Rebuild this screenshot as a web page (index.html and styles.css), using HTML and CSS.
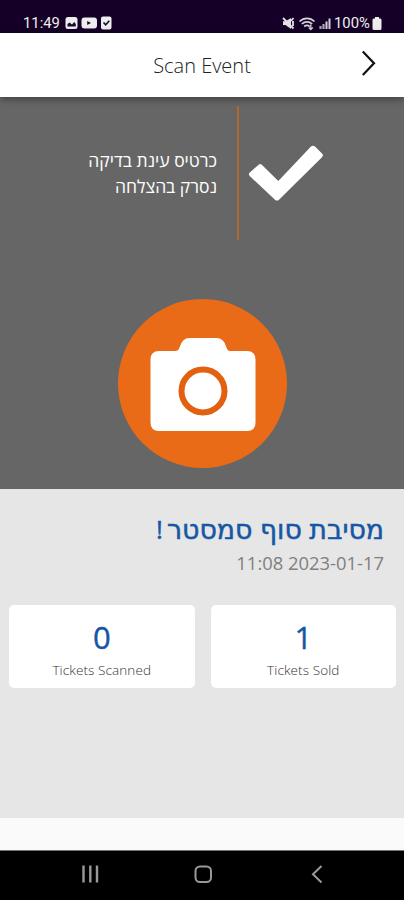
FILE: index.html
```html
<!DOCTYPE html>
<html lang="he">
<head>
<meta charset="utf-8">
<title>Scan Event</title>
<link rel="stylesheet" href="styles.css">
</head>
<body>
<div class="statusbar">
  <span class="clock">11:49</span>
  <svg class="status-left" width="48" height="14" viewBox="0 0 48 14">
    <rect x="0.5" y="1" width="12" height="12" rx="2.5" fill="#eee"/>
    <path d="M2.500 10.500V8l2-1.500 2.500 2 2.200-2.500 1.600 2v2.500z" fill="#190a30"/>
    <rect x="16.500" y="1.500" width="15.500" height="11" rx="3" fill="#eee"/>
    <path d="M22.200 4.900l3.800 2.100-3.800 2.100z" fill="#190a30"/>
    <rect x="36" y="0.500" width="10.500" height="13" rx="2" fill="#eee"/>
    <path d="M38.500 6.500l2.200 2.300 3.600-4" fill="none" stroke="#190a30" stroke-width="1.600"/>
  </svg>
  <svg class="status-right" width="50" height="15" viewBox="0 0 50 15">
    <path d="M1 5.200h2.500L9 2v11L3.500 9H1z" fill="#e4e2e8"/>
    <path d="M1 2l10.500 10.500M9 5l2.500-3M11 5v5" fill="none" stroke="#e4e2e8" stroke-width="1.800"/>
    <path d="M17.500 5.500c4.400-4.200 10.600-4.200 15 0M19.800 8c3-2.900 7.400-2.900 10.400 0M22.200 10.500c1.700-1.500 3.800-1.500 5.500 0" fill="none" stroke="#d4d2da" stroke-width="1.700"/>
    <path d="M28.800 8.500v5M26.800 11.500l2 2 2-2" fill="none" stroke="#d4d2da" stroke-width="1.300"/>
    <path d="M38.500 10v3M41.500 8v5" stroke="#aaa7b3" stroke-width="2.200"/>
    <path d="M44.500 5.500V13M47.500 2.500V13" stroke="#d4d2da" stroke-width="2"/>
  </svg>
  <span class="percent">100%</span>
  <svg class="battery" width="10" height="13" viewBox="0 0 10 13"><path d="M3 0h4v1.500h1.200Q9.500 1.500 9.500 3v8.500q0 1.500-1.500 1.500H2Q.5 13 .5 11.500V3q0-1.500 1.300-1.500H3z" fill="#eee"/></svg>
</div>
<header class="header">
  <h1 class="header-title">Scan Event</h1>
  <svg class="chevron" width="16" height="28" viewBox="0 0 16 28"><path d="M1.800 2.500L13 14.300 1.800 26" fill="none" stroke="#111" stroke-width="2.200"/></svg>
</header>
<main>
  <section class="scanner">
    <div class="result" dir="rtl">
      <svg class="check" width="78" height="58" viewBox="0 0 78 58"><path d="M12 20.500L2.800 28.500Q1 30.200 2.700 32L28 55.700q2 1.800 4 0L75 13.200q1.700-2 0-3.700L68 2.500q-2-1.700-4 0L31.300 37 14.500 20.500q-1.200-1-2.500 0z" fill="#fff"/></svg>
      <div class="message"><span class="line-one">כרטיס עינת בדיקה</span><span class="line-two">נסרק בהצלחה</span></div>
    </div>
    <div class="camera">
      <svg width="106" height="94" viewBox="0 0 106 94"><path d="M9 14h16Q28.500 14 29.500 10.500 32 1 39.500 1h27Q74 1 76.500 10.500q1 3.500 3.500 3.500h17q8.500 0 8.500 8.500v63q0 8.500-8.500 8.500H9q-8.500 0-8.500-8.500v-63Q.5 14 9 14z" fill="#fff"/><circle cx="53" cy="54" r="21.500" fill="none" stroke="#e26010" stroke-width="6"/></svg>
    </div>
  </section>
  <section class="event">
    <h2 class="event-name" dir="rtl"><span>מסיבת סוף סמסטר</span><span class="mark">!</span></h2>
    <p class="event-date">11:08 2023-01-17</p>
    <div class="stats">
      <div class="card"><span class="number">0</span><span class="label">Tickets Scanned</span></div>
      <div class="card"><span class="number">1</span><span class="label">Tickets Sold</span></div>
    </div>
  </section>
</main>
<nav class="navbar">
  <svg width="404" height="48" viewBox="0 0 404 48" fill="none" stroke="#999" stroke-width="2">
    <path d="M83.500 14.500v17M90.300 14.500v17M97 14.500v17" stroke-width="2.400"/>
    <rect x="195.500" y="15.500" width="15.500" height="15.500" rx="4.500"/>
    <path d="M321.500 15l-8.500 8.300 8.500 8.200"/>
  </svg>
</nav>
</body>
</html>
```

FILE: styles.css
```css
* { box-sizing: border-box; }
body { margin: 0; width: 404px; height: 900px; overflow: hidden; display: flex; flex-direction: column; background: #fafafa; font-family: "Open Sans", "Noto Sans", sans-serif; }
h1, h2, p { margin: 0; font-weight: 400; }
svg { display: block; flex: none; }
.statusbar { height: 33px; flex: none; display: flex; align-items: center; padding: 13px 22px 0 23px; background: #150127; color: #eee; font: 400 14.800px/20px Roboto, sans-serif; }
.clock { width: 42px; }
.status-right { margin-left: auto; }
.percent { margin-left: 2px; width: 38px; }
.header { height: 64px; flex: none; display: grid; grid-template-columns: 1fr auto 1fr; align-items: center; background: #fff; box-shadow: 0 2px 8px rgba(0, 0, 0, .4); z-index: 1; }
.header-title { grid-column: 2; font-size: 20px; line-height: 28px; padding-top: 1px; color: #222; font-weight: 330; }
.chevron { justify-self: end; margin-right: 27px; margin-top: -4px; }
.scanner { height: 392px; background: #666; padding-top: 9px; }
.result { height: 134px; display: flex; align-items: center; padding-right: 79px; color: #fff; }
.check { margin-left: 8px; }
.message { height: 134px; border-right: 2px solid #ae6832; padding: 42px 20px 0 0; display: flex; flex-direction: column; font-size: 17.500px; line-height: 25.500px; white-space: nowrap; }
.camera { width: 169px; height: 169px; margin: 59px 0 0 118px; border-radius: 50%; background: #e96b18; display: flex; align-items: center; justify-content: center; }
.event { height: 329px; background: #e6e6e6; padding: 22px 8px 0 9px; }
.event-name { display: flex; height: 36px; padding-right: 12px; font-family: "DejaVu Sans", sans-serif; font-size: 26.800px; line-height: 37px; word-spacing: -1px; -webkit-text-stroke: .5px #1557a4; color: #1557a4; white-space: nowrap; }
.mark { margin-right: 4px; font-family: "Open Sans", sans-serif; font-size: 26px; }
.event-date { text-align: right; padding-right: 12px; margin-top: 3px; font-size: 18.400px; line-height: 26px; color: #808080; }
.stats { display: grid; grid-template-columns: 1fr 1fr; gap: 16px; margin-top: 29px; }
.card { height: 83px; border-radius: 5px; background: #fff; display: flex; flex-direction: column; align-items: center; padding-top: 12px; }
.number { font-size: 31px; line-height: 40px; color: #1557a4; -webkit-text-stroke: .4px #1557a4; }
.label { font-size: 13.500px; line-height: 20px; margin-top: 3px; color: #333; font-weight: 330; letter-spacing: .1px; }
.navbar { margin-top: auto; height: 50px; background: #000; border-top: 1px solid #777; }
```
